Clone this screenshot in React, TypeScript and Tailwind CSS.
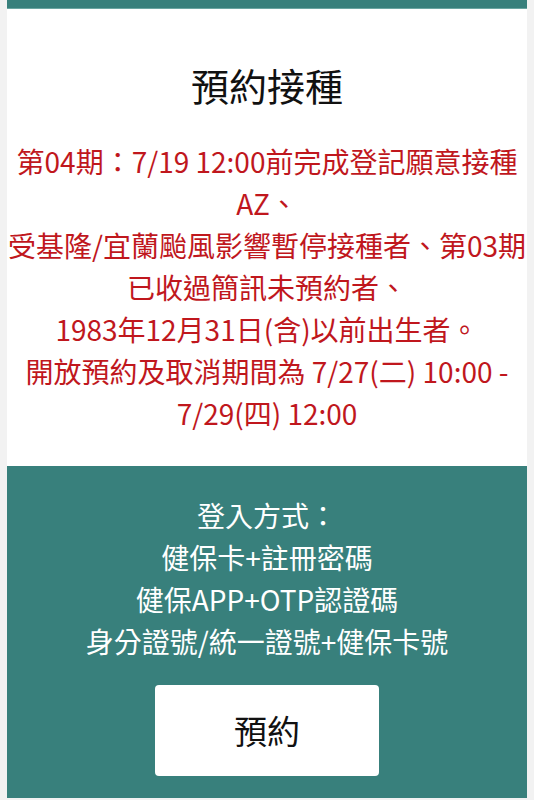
export default function App() {
  const font = { fontFamily: '"Noto Sans CJK TC", "Noto Sans", sans-serif' };

  return (
    <div className="min-h-screen bg-[#f2f2f2] px-[7px]" style={font}>
      <div className="flex flex-col">
        <div className="h-[9px] border-b border-[#6aa5a1] bg-[#38807c]" />

        <section className="bg-white pb-[32px] pt-[47px] text-center">
          <h1 className="text-[38px] leading-[57px] text-[#111]">預約接種</h1>
          <div className="mt-[27px] whitespace-nowrap text-[28px] leading-[42px] text-[#c0171d]">
            <p>第04期：7/19 12:00前完成登記願意接種</p>
            <p>AZ、</p>
            <p>受基隆/宜蘭颱風影響暫停接種者、第03期</p>
            <p>已收過簡訊未預約者、</p>
            <p>1983年12月31日(含)以前出生者。</p>
            <p>開放預約及取消期間為 7/27(二) 10:00 -</p>
            <p>7/29(四) 12:00</p>
          </div>
        </section>

        <section className="flex flex-col items-center bg-[#38807c] pb-[22px] pt-[28px] text-center">
          <div className="text-[28px] leading-[42px] text-white">
            <p>登入方式：</p>
            <p>健保卡+註冊密碼</p>
            <p>健保APP+OTP認證碼</p>
            <p>身分證號/統一證號+健保卡號</p>
          </div>
          <button
            type="button"
            className="mt-[23px] flex h-[91px] w-[224px] items-center justify-center rounded-[4px] bg-white text-[33px] text-[#111]"
          >
            預約
          </button>
        </section>
      </div>
    </div>
  );
}
